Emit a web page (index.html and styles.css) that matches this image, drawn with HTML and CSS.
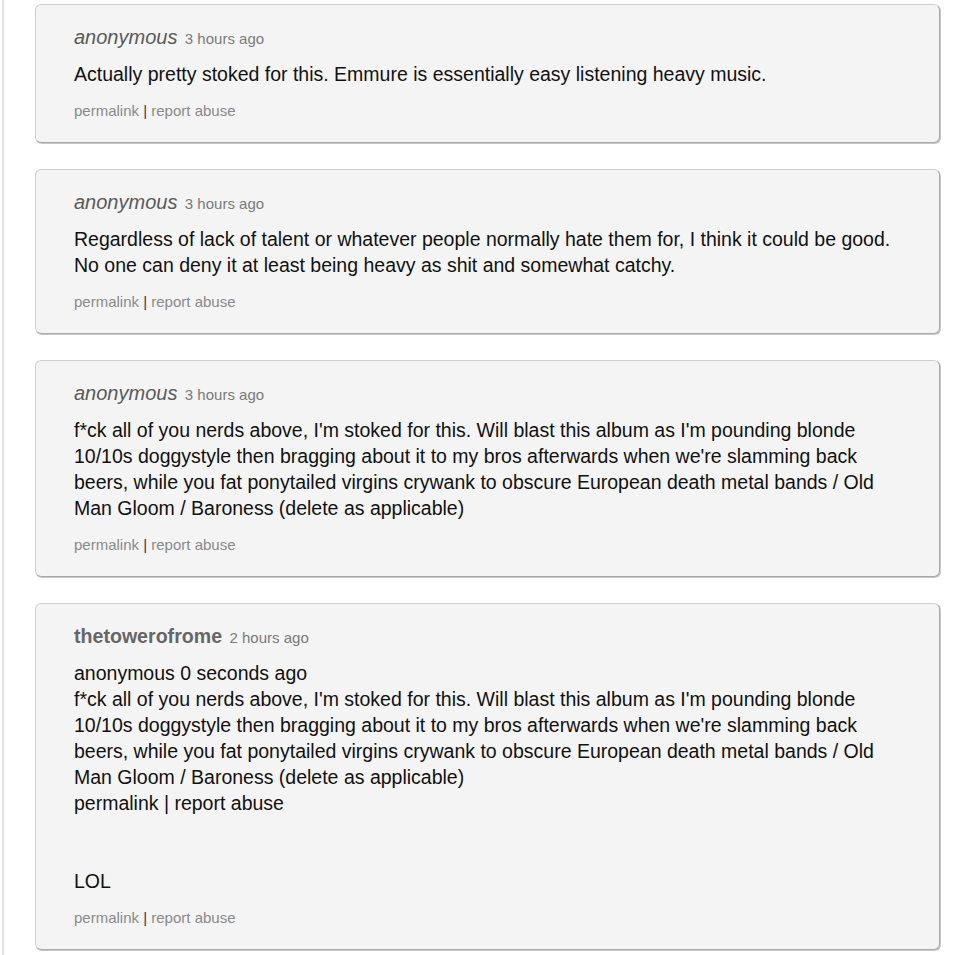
FILE: index.html
```html
<!DOCTYPE html>
<html>
<head>
<meta charset="utf-8">
<link rel="stylesheet" href="styles.css">
</head>
<body>
<div class="page">
  <div class="comment">
    <div class="meta"><span class="user anon">anonymous</span> <span class="time">3 hours ago</span></div>
    <div class="body">Actually pretty stoked for this. Emmure is essentially easy listening heavy music.</div>
    <div class="links"><span>permalink</span> <span class="pipe">|</span> <span>report abuse</span></div>
  </div>
  <div class="comment">
    <div class="meta"><span class="user anon">anonymous</span> <span class="time">3 hours ago</span></div>
    <div class="body">Regardless of lack of talent or whatever people normally hate them for, I think it could be good. No one can deny it at least being heavy as shit and somewhat catchy.</div>
    <div class="links"><span>permalink</span> <span class="pipe">|</span> <span>report abuse</span></div>
  </div>
  <div class="comment">
    <div class="meta"><span class="user anon">anonymous</span> <span class="time">3 hours ago</span></div>
    <div class="body">f*ck all of you nerds above, I'm stoked for this. Will blast this album as I'm pounding blonde 10/10s doggystyle then bragging about it to my bros afterwards when we're slamming back beers, while you fat ponytailed virgins crywank to obscure European death metal bands / Old Man Gloom / Baroness (delete as applicable)</div>
    <div class="links"><span>permalink</span> <span class="pipe">|</span> <span>report abuse</span></div>
  </div>
  <div class="comment">
    <div class="meta"><span class="user member">thetowerofrome</span> <span class="time">2 hours ago</span></div>
    <div class="body">anonymous 0 seconds ago<br>f*ck all of you nerds above, I'm stoked for this. Will blast this album as I'm pounding blonde 10/10s doggystyle then bragging about it to my bros afterwards when we're slamming back beers, while you fat ponytailed virgins crywank to obscure European death metal bands / Old Man Gloom / Baroness (delete as applicable)<br>permalink | report abuse<br><br><br>LOL</div>
    <div class="links"><span>permalink</span> <span class="pipe">|</span> <span>report abuse</span></div>
  </div>
</div>
</body>
</html>
```
FILE: styles.css
```css
html, body {
  margin: 0;
  padding: 0;
  background: #ffffff;
}
body {
  font-family: "Liberation Sans", Arial, Helvetica, sans-serif;
}
.page {
  margin-left: 2px;
  border-left: 2px solid #e2e2e2;
  padding: 4px 20px 4px 31px;
  min-height: 947px;
  display: flex;
  flex-direction: column;
  gap: 26px;
}
.comment {
  background: #f4f4f4;
  border: 1px solid #cfcfcf;
  border-right-color: #a9a9a9;
  border-bottom-color: #a9a9a9;
  border-radius: 6px;
  padding: 20px 38px 21px 38px;
  box-shadow: 1px 1px 0 #c8c8c8;
}
.meta {
  height: 24px;
  line-height: 24px;
}
.user {
  font-size: 20px;
  color: #5a5a5a;
}
.anon {
  font-style: italic;
}
.member {
  font-weight: bold;
  font-size: 19.6px;
  color: #666666;
}
.time {
  font-size: 15px;
  line-height: 1;
  color: #7a7a7a;
  margin-left: 3px;
}
.body {
  margin-top: 12px;
  font-size: 19.5px;
  line-height: 26px;
  color: #111111;
}
.links {
  margin-top: 14px;
  font-size: 15px;
  line-height: 20px;
  color: #8a8a8a;
}
.pipe {
  color: #3a3a4a;
}
```
